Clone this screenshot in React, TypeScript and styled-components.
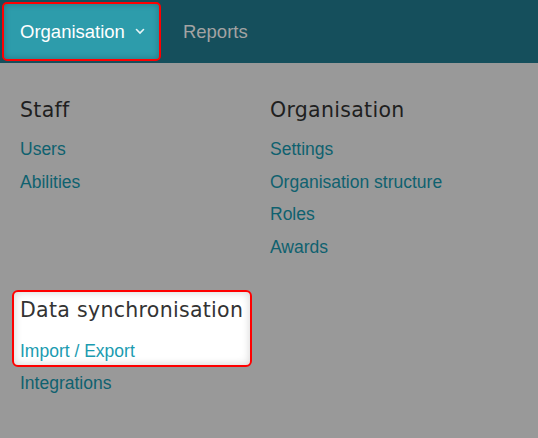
import styled, { createGlobalStyle } from 'styled-components'

const GlobalStyle = createGlobalStyle`
  html, body {
    margin: 0;
    padding: 0;
    background: #999999;
  }
  body {
    font-family: "Liberation Sans", Arial, sans-serif;
  }
`

const Page = styled.div`
  width: 538px;
  height: 438px;
  background: #999999;
  overflow: hidden;
`

const NavBar = styled.nav`
  display: flex;
  align-items: stretch;
  height: 63px;
  background: #154f5c;
  padding: 2px 0 2px 2px;
  box-sizing: border-box;
`

const NavItem = styled.button<{ $active?: boolean }>`
  display: flex;
  align-items: center;
  gap: 10px;
  border: ${(p) => (p.$active ? '2px solid #f00' : '2px solid transparent')};
  border-radius: 5px;
  background: ${(p) => (p.$active ? '#2d9cab' : 'transparent')};
  box-shadow: ${(p) => (p.$active ? 'inset 0 0 6px rgba(0, 0, 0, 0.25)' : 'none')};
  color: ${(p) => (p.$active ? '#ffffff' : '#a3a3a3')};
  font: inherit;
  font-size: 18.5px;
  padding: 0 ${(p) => (p.$active ? '14px' : '16px')} 0 ${(p) => (p.$active ? '16px' : '20px')};
  cursor: pointer;
`

const Chevron = () => (
  <svg width="10" height="7" viewBox="0 0 10 7" fill="none">
    <path d="M1.5 1.5 L5 5 L8.5 1.5" stroke="#e8f4f6" strokeWidth="1.6" strokeLinecap="round" />
  </svg>
)

const Menu = styled.div`
  display: grid;
  grid-template-columns: 250px 250px;
  grid-template-rows: auto auto;
  row-gap: 27px;
  padding: 34px 0 0 12px;
`

const Section = styled.section`
  display: flex;
  flex-direction: column;
  align-items: flex-start;
  padding-left: 8px;
`

const Spot = styled.div`
  display: flex;
  flex-direction: column;
  gap: 16px;
  margin-left: -8px;
  padding: 5px 4px 2px 6px;
  width: 226px;
  background: #ffffff;
  border: 2px solid #f00;
  border-radius: 6px;
  box-shadow: inset 0 0 8px rgba(0, 0, 0, 0.18);
`

const Heading = styled.h3<{ $lit?: boolean }>`
  margin: 0 0 ${(p) => (p.$lit ? '0' : '10px')};
  font-family: "DejaVu Sans", "Noto Sans", sans-serif;
  font-weight: 400;
  font-size: 20.5px;
  letter-spacing: 0.3px;
  line-height: 26px;
  white-space: nowrap;
  color: ${(p) => (p.$lit ? '#333333' : '#1f1f1f')};
`

const LinkList = styled.div`
  display: flex;
  flex-direction: column;
`

const MenuLink = styled.a<{ $lit?: boolean }>`
  display: block;
  font-size: 17.5px;
  line-height: ${(p) => (p.$lit ? '24px' : '32.5px')};
  text-decoration: none;
  color: ${(p) => (p.$lit ? '#1b9bb0' : '#0f616f')};
`

export default function App(): JSX.Element {
  return (
    <>
      <GlobalStyle />
      <Page>
        <NavBar>
          <NavItem $active type="button">
            Organisation <Chevron />
          </NavItem>
          <NavItem type="button">Reports</NavItem>
        </NavBar>
        <Menu>
          <Section>
            <Heading>Staff</Heading>
            <LinkList>
              <MenuLink href="#">Users</MenuLink>
              <MenuLink href="#">Abilities</MenuLink>
            </LinkList>
          </Section>
          <Section>
            <Heading>Organisation</Heading>
            <LinkList>
              <MenuLink href="#">Settings</MenuLink>
              <MenuLink href="#">Organisation structure</MenuLink>
              <MenuLink href="#">Roles</MenuLink>
              <MenuLink href="#">Awards</MenuLink>
            </LinkList>
          </Section>
          <Section>
            <Spot>
              <Heading $lit>Data synchronisation</Heading>
              <MenuLink $lit href="#">
                Import / Export
              </MenuLink>
            </Spot>
            <MenuLink href="#">Integrations</MenuLink>
          </Section>
        </Menu>
      </Page>
    </>
  )
}
